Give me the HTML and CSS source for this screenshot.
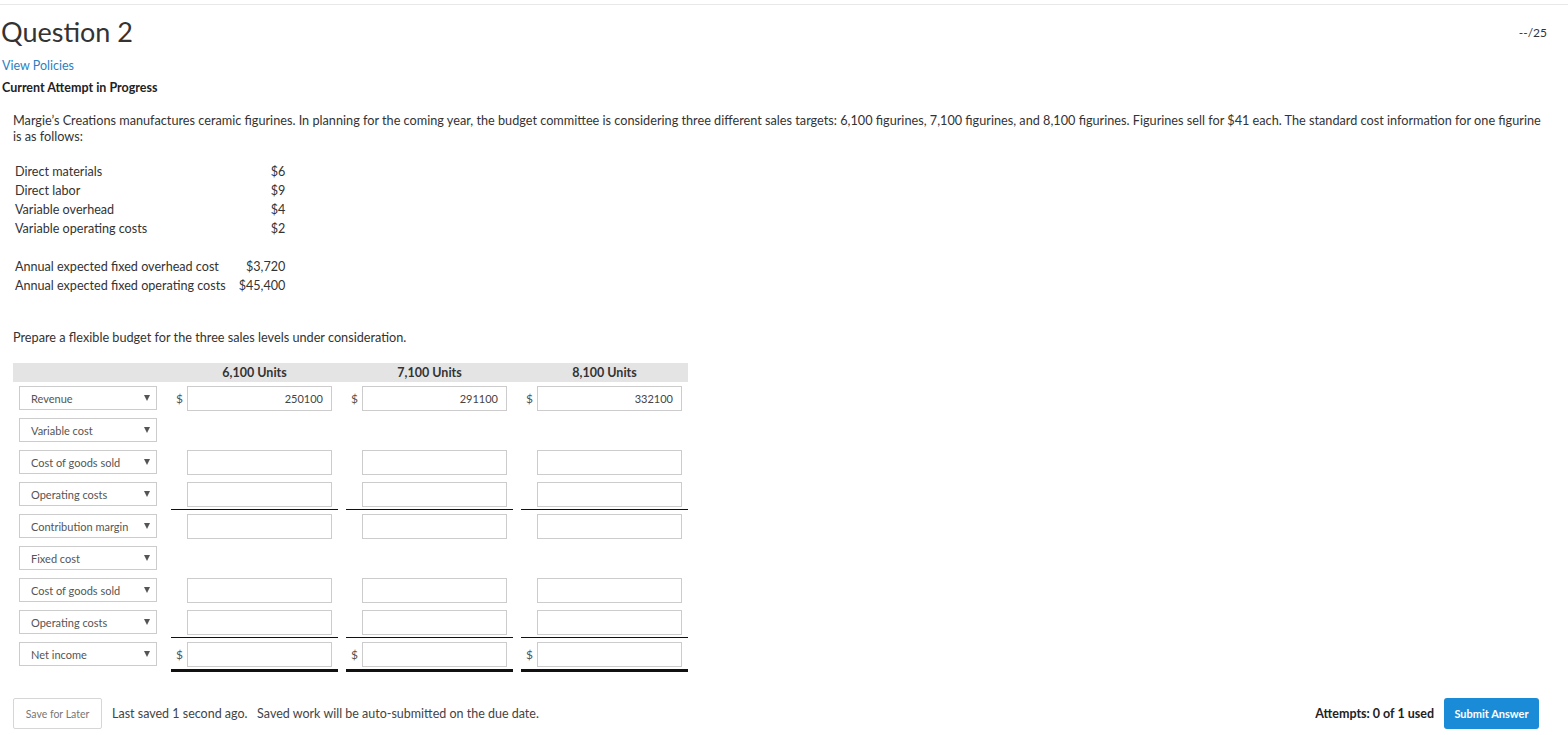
FILE: index.html
```html
<!DOCTYPE html>
<html lang="en">
<head>
<meta charset="utf-8">
<title>Question 2</title>
<link rel="stylesheet" href="styles.css">
</head>
<body>
<div class="page">
  <div class="qhead">
    <h1 class="qtitle">Question 2</h1>
    <span class="score">--/25</span>
  </div>
  <a class="policies" href="#">View Policies</a>
  <div class="attempt">Current Attempt in Progress</div>

  <div class="question">
    <p class="stem">Margie’s Creations manufactures ceramic figurines. In planning for the coming year, the budget committee is considering three different sales targets: 6,100 figurines, 7,100 figurines, and 8,100 figurines. Figurines sell for $41 each. The standard cost information for one figurine is as follows:</p>

    <table class="costs">
      <tr><td class="lbl">Direct materials</td><td class="amt">$6</td></tr>
      <tr><td class="lbl">Direct labor</td><td class="amt">$9</td></tr>
      <tr><td class="lbl">Variable overhead</td><td class="amt">$4</td></tr>
      <tr><td class="lbl">Variable operating costs</td><td class="amt">$2</td></tr>
      <tr><td class="lbl">&nbsp;</td><td class="amt"></td></tr>
      <tr><td class="lbl">Annual expected fixed overhead cost</td><td class="amt">$3,720</td></tr>
      <tr><td class="lbl">Annual expected fixed operating costs</td><td class="amt">$45,400</td></tr>
    </table>

    <p class="prompt">Prepare a flexible budget for the three sales levels under consideration.</p>

    <div class="budget">
      <div class="bhead">
        <div></div>
        <div class="unit">6,100 Units</div>
        <div class="unit">7,100 Units</div>
        <div class="unit">8,100 Units</div>
      </div>

      <div class="brow">
        <div class="lcell"><div class="sel"><span>Revenue</span><span class="arr"></span></div></div>
        <div class="vcell"><span class="cur">$</span><div class="inp">250100</div></div>
        <div class="vcell"><span class="cur">$</span><div class="inp">291100</div></div>
        <div class="vcell"><span class="cur">$</span><div class="inp">332100</div></div>
      </div>

      <div class="brow">
        <div class="lcell"><div class="sel"><span>Variable cost</span><span class="arr"></span></div></div>
        <div class="vcell"></div>
        <div class="vcell"></div>
        <div class="vcell"></div>
      </div>

      <div class="brow">
        <div class="lcell"><div class="sel"><span>Cost of goods sold</span><span class="arr"></span></div></div>
        <div class="vcell"><span class="cur"></span><div class="inp"></div></div>
        <div class="vcell"><span class="cur"></span><div class="inp"></div></div>
        <div class="vcell"><span class="cur"></span><div class="inp"></div></div>
      </div>

      <div class="brow">
        <div class="lcell"><div class="sel"><span>Operating costs</span><span class="arr"></span></div></div>
        <div class="vcell rule"><span class="cur"></span><div class="inp"></div></div>
        <div class="vcell rule"><span class="cur"></span><div class="inp"></div></div>
        <div class="vcell rule"><span class="cur"></span><div class="inp"></div></div>
      </div>

      <div class="brow">
        <div class="lcell"><div class="sel"><span>Contribution margin</span><span class="arr"></span></div></div>
        <div class="vcell"><span class="cur"></span><div class="inp"></div></div>
        <div class="vcell"><span class="cur"></span><div class="inp"></div></div>
        <div class="vcell"><span class="cur"></span><div class="inp"></div></div>
      </div>

      <div class="brow">
        <div class="lcell"><div class="sel"><span>Fixed cost</span><span class="arr"></span></div></div>
        <div class="vcell"></div>
        <div class="vcell"></div>
        <div class="vcell"></div>
      </div>

      <div class="brow">
        <div class="lcell"><div class="sel"><span>Cost of goods sold</span><span class="arr"></span></div></div>
        <div class="vcell"><span class="cur"></span><div class="inp"></div></div>
        <div class="vcell"><span class="cur"></span><div class="inp"></div></div>
        <div class="vcell"><span class="cur"></span><div class="inp"></div></div>
      </div>

      <div class="brow">
        <div class="lcell"><div class="sel"><span>Operating costs</span><span class="arr"></span></div></div>
        <div class="vcell rule"><span class="cur"></span><div class="inp"></div></div>
        <div class="vcell rule"><span class="cur"></span><div class="inp"></div></div>
        <div class="vcell rule"><span class="cur"></span><div class="inp"></div></div>
      </div>

      <div class="brow">
        <div class="lcell"><div class="sel"><span>Net income</span><span class="arr"></span></div></div>
        <div class="vcell dbl"><span class="cur">$</span><div class="inp"></div></div>
        <div class="vcell dbl"><span class="cur">$</span><div class="inp"></div></div>
        <div class="vcell dbl"><span class="cur">$</span><div class="inp"></div></div>
      </div>
    </div>
  </div>

  <div class="actions">
    <button class="save" type="button">Save for Later</button>
    <span class="saved">Last saved 1 second ago.&nbsp;&nbsp; Saved work will be auto-submitted on the due date.</span>
    <span class="spacer"></span>
    <span class="attempts">Attempts: 0 of 1 used</span>
    <button class="submit" type="button">Submit Answer</button>
  </div>
</div>
</body>
</html>
```

FILE: styles.css
```css
html, body {
  margin: 0;
  padding: 0;
  background: #ffffff;
}

body {
  padding-top: 4px;
  font-family: Lato, "Open Sans", "Liberation Sans", sans-serif;
  font-size: 12.6px;
  color: #333333;
}

.page {
  border-top: 1px solid #e8e8e8;
  padding: 0 21px 0 1px;
}

.qhead {
  display: flex;
  align-items: center;
  justify-content: space-between;
  margin-top: 11px;
  height: 32px;
}

.qtitle {
  margin: 0;
  font-size: 27px;
  font-weight: 400;
  line-height: 32px;
  color: #333333;
}

.score {
  font-size: 12px;
  color: #333333;
}

.policies {
  display: block;
  margin-top: 10px;
  line-height: 16px;
  font-size: 12.5px;
  color: #2c7fbf;
  text-decoration: none;
  padding-left: 1px;
}

.attempt {
  margin-top: 6px;
  line-height: 16px;
  font-size: 12.5px;
  font-weight: 700;
  color: #222222;
  padding-left: 1px;
}

.question {
  margin-left: 12px;
}

.stem {
  margin: 16px 0 0 0;
  line-height: 16px;
  font-size: 12.7px;
  color: #333333;
}

.costs {
  margin-top: 18px;
  border-collapse: collapse;
  font-size: 12.6px;
}

.costs td {
  padding: 0;
  height: 19px;
  line-height: 19px;
}

.costs .lbl {
  padding-left: 2px;
}

.costs .amt {
  text-align: right;
  padding-left: 13px;
}

.prompt {
  margin: 34px 0 0 0;
  line-height: 16px;
  font-size: 12.7px;
}

.budget {
  margin-top: 18px;
  width: 675px;
}

.bhead,
.brow {
  display: grid;
  grid-template-columns: 150px 167px 167px 167px;
  column-gap: 8px;
}

.bhead {
  background: #e4e4e4;
  height: 19px;
  line-height: 19px;
  font-size: 12.5px;
  font-weight: 700;
  color: #333333;
}

.unit {
  text-align: center;
}

.brow {
  height: 32px;
}

.lcell {
  padding: 4px 0 0 6px;
}

.sel {
  box-sizing: border-box;
  width: 138px;
  height: 24px;
  border: 1px solid #cccccc;
  background: #ffffff;
  display: flex;
  align-items: center;
  justify-content: space-between;
  padding: 0 6px 0 11px;
  font-size: 11px;
  color: #555555;
}

.arr {
  width: 0;
  height: 0;
  border-left: 3px solid transparent;
  border-right: 3px solid transparent;
  border-top: 6px solid #555555;
}

.vcell {
  box-sizing: border-box;
  display: flex;
  align-items: flex-start;
  padding-top: 4px;
  height: 32px;
}

.vcell.rule {
  border-bottom: 1px solid #111111;
  height: 32px;
}

.vcell.dbl {
  border-bottom: 3px solid #111111;
  height: 34px;
}

.cur {
  width: 16px;
  box-sizing: border-box;
  padding-left: 5px;
  line-height: 25px;
  font-size: 12px;
  color: #555555;
}

.inp {
  box-sizing: border-box;
  width: 145px;
  height: 25px;
  border: 1px solid #cccccc;
  background: #ffffff;
  text-align: right;
  padding-right: 8px;
  line-height: 23px;
  font-size: 11px;
  color: #444444;
}

.actions {
  display: flex;
  align-items: center;
  margin-top: 28px;
  margin-left: 12px;
  margin-right: 8px;
}

.save {
  box-sizing: border-box;
  height: 31px;
  width: 89px;
  border: 1px solid #d6d6d6;
  border-radius: 2px;
  background: #ffffff;
  font-family: Lato, "Open Sans", "Liberation Sans", sans-serif;
  font-size: 10.5px;
  color: #777777;
  padding: 0;
}

.saved {
  margin-left: 10px;
  font-size: 12.5px;
  color: #444444;
}

.spacer {
  flex: 1;
}

.attempts {
  font-size: 12.5px;
  font-weight: 700;
  color: #222222;
}

.submit {
  box-sizing: border-box;
  margin-left: 10px;
  height: 31px;
  width: 95px;
  border: none;
  border-radius: 3px;
  background: #1a8bd6;
  color: #ffffff;
  font-family: Lato, "Open Sans", "Liberation Sans", sans-serif;
  font-size: 11px;
  font-weight: 700;
  padding: 0;
}
```
